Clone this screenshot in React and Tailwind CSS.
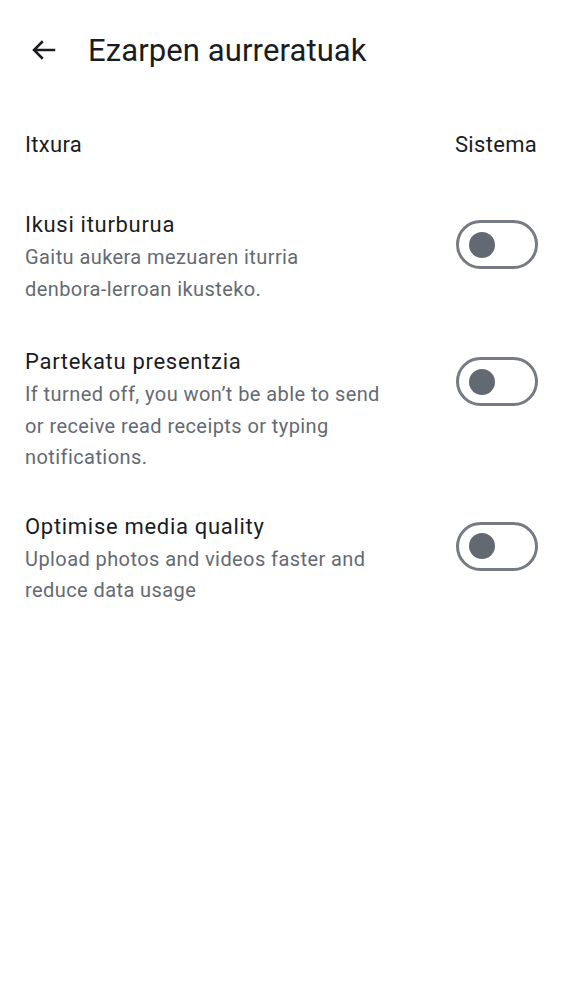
const SETTINGS = [
  {
    title: 'Ikusi iturburua',
    desc: 'Gaitu aukera mezuaren iturria denbora-lerroan ikusteko.',
    gap: 'mb-[40px]',
  },
  {
    title: 'Partekatu presentzia',
    desc: 'If turned off, you won’t be able to send or receive read receipts or typing notifications.',
    gap: 'mb-[36px]',
  },
  {
    title: 'Optimise media quality',
    desc: 'Upload photos and videos faster and reduce data usage',
    gap: '',
  },
];

function Toggle() {
  return (
    <div className="w-[82px] h-[49px] rounded-full border-[3px] border-[#767a82] flex items-center pl-[10px] shrink-0">
      <div className="w-[26px] h-[26px] rounded-full bg-[#636972]" />
    </div>
  );
}

export default function App() {
  return (
    <div className="w-[562px] h-[1000px] bg-white font-['Roboto',sans-serif] text-[#1a1c1f]">
      <div className="flex items-center h-[100px] pl-[29px]">
        <svg width="30" height="30" viewBox="0 0 24 24" fill="none" stroke="#1a1c1f" strokeWidth="2">
          <path d="M21 12H4M11 5l-7 7 7 7" />
        </svg>
        <h1 className="ml-[29px] text-[31px] leading-none tracking-[0.1px]">Ezarpen aurreratuak</h1>
      </div>

      <div className="flex items-center justify-between px-[25px] h-[88px]">
        <span className="text-[22px] tracking-[0.3px]">Itxura</span>
        <span className="text-[22px] tracking-[0.3px]">Sistema</span>
      </div>

      <div className="flex flex-col mt-[20px]">
        {SETTINGS.map(s => (
          <div key={s.title} className={`flex items-start justify-between pl-[25px] pr-[24px] ${s.gap}`}>
            <div className="w-[358px]">
              <div className="text-[22px] leading-[34px] tracking-[0.7px]">{s.title}</div>
              <div className="text-[20px] leading-[31.5px] tracking-[0.42px] text-[#646a73]">{s.desc}</div>
            </div>
            <div className="mt-[12px]">
              <Toggle />
            </div>
          </div>
        ))}
      </div>
    </div>
  );
}
